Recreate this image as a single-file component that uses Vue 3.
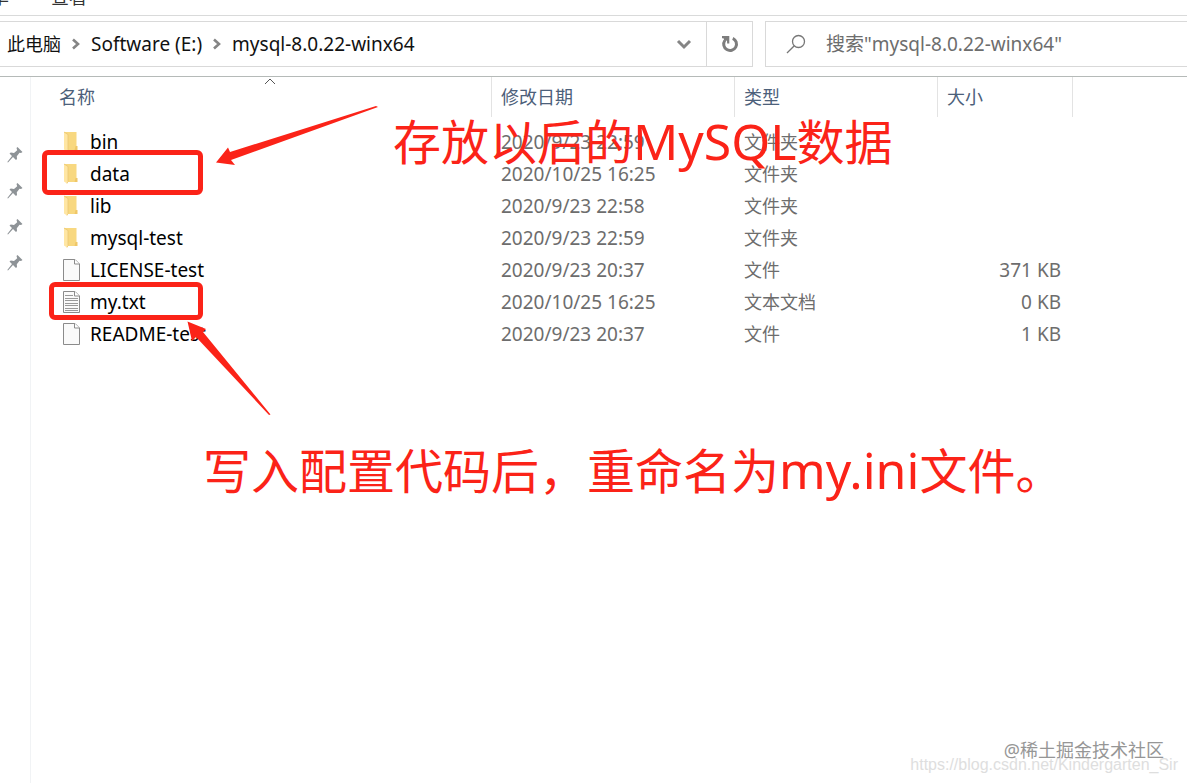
<script setup>
const files = [
  { name: 'bin', date: '2020/9/23 22:59', type: '文件夹', size: '', icon: 'folder' },
  { name: 'data', date: '2020/10/25 16:25', type: '文件夹', size: '', icon: 'folder' },
  { name: 'lib', date: '2020/9/23 22:58', type: '文件夹', size: '', icon: 'folder' },
  { name: 'mysql-test', date: '2020/9/23 22:59', type: '文件夹', size: '', icon: 'folder' },
  { name: 'LICENSE-test', date: '2020/9/23 20:37', type: '文件', size: '371 KB', icon: 'file' },
  { name: 'my.txt', date: '2020/10/25 16:25', type: '文本文档', size: '0 KB', icon: 'text' },
  { name: 'README-test', date: '2020/9/23 20:37', type: '文件', size: '1 KB', icon: 'file' },
]
const crumbs = [
  { label: '此电脑', latin: false },
  { label: 'Software (E:)', latin: true },
  { label: 'mysql-8.0.22-winx64', latin: true },
]
</script>

<template>
  <div class="explorer">
    <nav class="tabs">
      <button type="button">享</button>
      <button type="button">查看</button>
    </nav>

    <header class="toolbar">
      <div class="address">
        <nav class="crumbs">
          <template v-for="(crumb, i) in crumbs" :key="crumb.label">
            <svg v-if="i" class="sep" width="10" height="12" viewBox="0 0 10 12">
              <path d="M2 1.5 7 6 2 10.5" fill="none" stroke="#858585" stroke-width="2.6" />
            </svg>
            <a href="#" :class="{ latin: crumb.latin }">{{ crumb.label }}</a>
          </template>
        </nav>
        <button type="button" class="history" aria-label="历史记录">
          <svg width="16" height="12" viewBox="0 0 16 12">
            <path d="M2 3 8 9 14 3" fill="none" stroke="#858585" stroke-width="3" />
          </svg>
        </button>
        <button type="button" class="refresh" aria-label="刷新">
          <svg width="18" height="18" viewBox="0 0 18 18">
            <path d="M11.800 3.300A6.400 6.400 0 1 1 3.800 5.500" fill="none" stroke="#7d7d7d" stroke-width="3" />
            <path d="M1 2.200H7.200V8.500" fill="none" stroke="#7d7d7d" stroke-width="2.200" />
            <path d="M2.500 3H7V7L5.500 5.500 3.500 6.500z" fill="#7d7d7d" />
          </svg>
        </button>
      </div>
      <label class="search">
        <svg width="20" height="20" viewBox="0 0 20 20">
          <circle cx="12.500" cy="7.500" r="6" fill="none" stroke="#777" stroke-width="1.300" />
          <path d="M8.300 11.700 1 19" fill="none" stroke="#777" stroke-width="1.300" />
        </svg>
        <input type="text" class="latin" aria-label="搜索" placeholder="搜索&quot;mysql-8.0.22-winx64&quot;" />
      </label>
    </header>

    <div class="body">
      <aside class="pins">
        <svg v-for="n in 4" :key="n" width="16" height="16" viewBox="0 0 16 16">
          <path d="M10.500 0 15.500 5 14 6 12.500 5.800 9.800 9.300 10 12 9 13 6 10 1 15.500 0.300 15 5 9 2.500 6.500 3.800 5.500 7 6 10.200 3.200 9.500 1z" fill="#8e9397" />
        </svg>
      </aside>

      <main class="content">
        <table>
          <colgroup>
            <col class="c-name" />
            <col class="c-date" />
            <col class="c-type" />
            <col class="c-size" />
            <col />
          </colgroup>
          <thead>
            <tr>
              <th class="name">
                名称
                <svg class="sort" width="12" height="7" viewBox="0 0 12 7">
                  <path d="M1 6 6 1 11 6" fill="none" stroke="#555" />
                </svg>
              </th>
              <th>修改日期</th>
              <th>类型</th>
              <th>大小</th>
              <td></td>
            </tr>
          </thead>
          <tbody>
            <tr v-for="f in files" :key="f.name">
              <td class="name latin">
                <div class="entry">
                  <svg v-if="f.icon === 'folder'" width="18" height="22" viewBox="0 0 18 22">
                    <path d="M2 1H14.500V19H6z" fill="#f8d880" />
                    <path d="M13.500 15H15.500V19H12.500z" fill="#efc768" />
                    <path d="M2 1 6 3.500V18.500L5 20.500 2 18.500z" fill="#ffe6a3" />
                    <path d="M2 1 6 3.500V18.500L5 20.500" fill="none" stroke="#e9c673" stroke-width="0.800" />
                  </svg>
                  <svg v-else width="18" height="22" viewBox="0 0 18 22">
                    <path d="M1.500 0.500H13L17.500 5V21.500H1.500z" fill="#fafafa" stroke="#8b8b8b" />
                    <path d="M12.500 0.500V5H17.500" fill="#fff" stroke="#8b8b8b" />
                    <path v-if="f.icon === 'text'" d="M3 4.500h8M3 7.500h13M3 9.500h13M3 12.500h13M3 14.500h13M3 17.500h13M3 19.500h13" stroke="#999" />
                  </svg>
                  <span>{{ f.name }}</span>
                </div>
              </td>
              <td class="latin">{{ f.date }}</td>
              <td>{{ f.type }}</td>
              <td class="size latin">{{ f.size }}</td>
              <td></td>
            </tr>
          </tbody>
        </table>
      </main>
    </div>

    <div class="frame frame-data"></div>
    <div class="frame frame-my"></div>
    <svg class="arrows" width="400" height="430" viewBox="0 0 400 430">
      <path d="M216 162.500 228 147.500 230 152 376 106 378 107 231 160 235 165z" fill="#fb2318" />
      <path d="M187.500 321.500 206 329 203 332 270.500 414.500 269 415 196 337 192 341z" fill="#fb2318" />
    </svg>
    <p class="note note-data">存放以后的<span>MySQL</span>数据</p>
    <p class="note note-my">写入配置代码后，重命名为<span>my.ini</span>文件。</p>
    <p class="mark url">https://blog.csdn.net/Kindergarten_Sir</p>
    <p class="mark community">@稀土掘金技术社区</p>
  </div>
</template>

<style>
body {
  margin: 0;
  background: #fff;
}
</style>

<style scoped>
.explorer {
  position: relative;
  display: flex;
  flex-direction: column;
  min-height: 100vh;
  overflow: hidden;
  background: #fff;
  color: #111;
  font-family: "Noto Sans", "Noto Sans CJK SC", sans-serif;
  font-size: 18px;
  line-height: 32px;
}
button,
input {
  padding: 0;
  border: 0;
  background: none;
  color: inherit;
  font: inherit;
}
a {
  color: inherit;
  text-decoration: none;
}
.latin {
  font-size: 19px;
}
.tabs {
  display: flex;
  align-items: flex-end;
  gap: 42px;
  height: 15px;
  overflow: hidden;
  border-bottom: 1px solid #d9dada;
}
.tabs button {
  margin-bottom: 2px;
  margin-left: -9px;
  color: #333;
}
.tabs button + button {
  margin-left: 0;
}
.toolbar {
  display: grid;
  grid-template-columns: 753fr 422fr;
  gap: 12px;
  padding: 5px 0 9px;
  border-bottom: 1px solid #b5bab8;
}
.address {
  box-sizing: border-box;
  display: flex;
  height: 46px;
  border: 1px solid #d9d9d9;
  border-left: 0;
}
.crumbs {
  flex: 1;
  display: flex;
  align-items: center;
  padding-left: 7px;
}
.sep {
  margin: 0 10px;
}
.history {
  width: 44px;
}
.refresh {
  width: 46px;
  border-left: 1px solid #d9d9d9;
}
.history svg,
.refresh svg {
  display: block;
  margin: auto;
}
.search {
  box-sizing: border-box;
  display: flex;
  align-items: center;
  gap: 20px;
  height: 46px;
  padding-left: 20px;
  border: 1px solid #d9d9d9;
  border-right: 0;
}
.search input {
  flex: 1;
  min-width: 0;
  outline: none;
}
.search input::placeholder {
  color: #6d6d6d;
  opacity: 1;
}
.body {
  flex: 1;
  display: flex;
}
.pins {
  box-sizing: border-box;
  width: 31px;
  display: flex;
  flex-direction: column;
  gap: 20px;
  padding: 70px 0 0 7px;
  border-right: 1px solid #f1f3f5;
}
.content {
  flex: 1;
}
table {
  width: 100%;
  table-layout: fixed;
  border-spacing: 0;
}
.c-name {
  width: 461px;
}
.c-date {
  width: 243px;
}
.c-type {
  width: 203px;
}
.c-size {
  width: 135px;
}
th,
td {
  padding: 0 0 0 9px;
  text-align: left;
  font-weight: 400;
  white-space: nowrap;
}
th {
  position: relative;
  height: 40px;
  border-right: 1px solid #e3e3e3;
  color: #4c607a;
}
.name {
  padding-left: 28px;
}
.sort {
  position: absolute;
  top: 1px;
  left: 50%;
  margin-left: 3px;
}
tbody::before {
  content: "";
  display: block;
  height: 9px;
}
tbody td {
  height: 32px;
  color: #6d6d6d;
}
tbody .name {
  padding-left: 31px;
  color: #000;
}
.entry {
  display: flex;
  align-items: center;
  gap: 10px;
}
.size {
  padding-right: 12px;
  text-align: right;
}
.frame {
  position: absolute;
  box-sizing: border-box;
  border: 5px solid #fb2318;
  border-radius: 6px;
}
.frame-data {
  left: 42px;
  top: 150px;
  width: 161px;
  height: 45px;
}
.frame-my {
  left: 49px;
  top: 282px;
  width: 154px;
  height: 38px;
}
.arrows {
  position: absolute;
  left: 0;
  top: 0;
}
.note {
  position: absolute;
  margin: 0;
  color: #fb2318;
  font-size: 48px;
  line-height: 64px;
  white-space: nowrap;
}
.note span {
  font-size: 50px;
}
.note-data {
  left: 393px;
  top: 109px;
}
.note-my {
  left: 203px;
  top: 438px;
}
.mark {
  position: absolute;
  margin: 0;
  line-height: 24px;
  white-space: nowrap;
}
.community {
  right: 23px;
  bottom: 21px;
  color: #969696;
}
.url {
  right: 9px;
  bottom: 6px;
  color: #dedede;
  font-family: "Liberation Sans", sans-serif;
  font-size: 16px;
}
</style>
